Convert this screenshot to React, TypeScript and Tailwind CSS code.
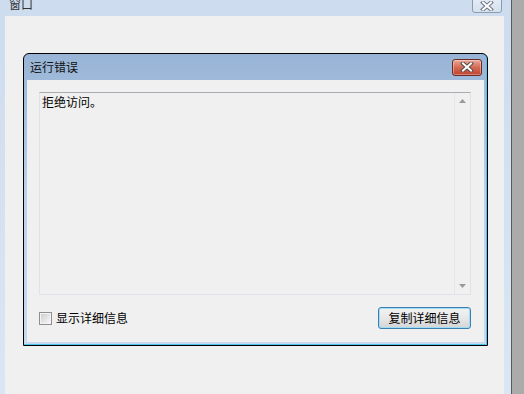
import React from "react";

const font = { fontFamily: '"Noto Sans CJK SC", "Noto Sans", sans-serif' };

function XIcon({ w, h, outline, fill }: { w: number; h: number; outline: string; fill: string }) {
  return (
    <svg width={w} height={h} viewBox="0 0 12 10">
      <path d="M2 1.5 L10 8.5 M10 1.5 L2 8.5" stroke={outline} strokeWidth="4" strokeLinecap="square" />
      <path d="M2 1.5 L10 8.5 M10 1.5 L2 8.5" stroke={fill} strokeWidth="2" strokeLinecap="square" />
    </svg>
  );
}

export default function App() {
  return (
    <div className="flex h-[394px] w-[524px] overflow-hidden text-[12px] leading-none text-black" style={font}>
      {/* outer window frame */}
      <div className="flex w-[511px] flex-col bg-gradient-to-b from-[#cddcee] to-[#dae6f3]">
        {/* title bar */}
        <div className="flex h-[16px] items-start justify-between pl-[9px] pr-[9px]">
          <span className="-mt-[2px] text-[12px] leading-[12px] text-[#333]">窗口</span>
          <div className="-mt-[2px] flex h-[15px] w-[30px] items-center justify-center rounded-b-[3px] border border-[#8d9bb0] bg-gradient-to-b from-[#e4ecf6] to-[#d5e1ef]">
            <XIcon w={14} h={10} outline="#6f7784" fill="#ffffff" />
          </div>
        </div>
        {/* client area */}
        <div className="ml-[5px] mr-[7px] flex-1 bg-[#f0f0f0] pl-[18px] pt-[37px]">
          {/* dialog */}
          <div className="flex h-[293px] w-[465px] flex-col rounded-t-[6px] border border-black bg-gradient-to-b from-[#98b4d6] via-[#bcd3ec] to-[#c6daef] px-[3px] pb-[3px] shadow-[inset_-1px_0_0_#4fc3e8,inset_0_-1px_0_#4fc3e8]">
            <div className="flex h-[26px] shrink-0 items-center justify-between pl-[3px] pr-[2px]">
              <span className="text-[12px] text-[#111]">运行错误</span>
              <div className="flex h-[17px] w-[30px] items-center justify-center rounded-[3px] border border-[#6b2b22] bg-gradient-to-b from-[#e9a899] via-[#d46a55] to-[#c0412b] shadow-[inset_0_0_0_1px_rgba(255,255,255,0.35)]">
                <XIcon w={14} h={10} outline="#5a4a48" fill="#ffffff" />
              </div>
            </div>
            <div className="flex flex-1 flex-col bg-[#f0f0f0] pl-[12px] pr-[13px] pt-[12px]">
              {/* text box */}
              <div className="flex h-[203px] w-[432px] border border-[#dfe3e8] border-t-[#abadb3] bg-[#f0f0f0]">
                <div className="flex-1 pl-[2px] pt-[3px] text-[12px] leading-[12px]">拒绝访问。</div>
                <div className="flex w-[16px] flex-col items-center justify-between border-l border-[#e6e6e6] py-[6px]">
                  <svg width="7" height="4" viewBox="0 0 7 4"><path d="M3.5 0 L7 4 L0 4 Z" fill="#9a9a9a" /></svg>
                  <svg width="7" height="4" viewBox="0 0 7 4"><path d="M0 0 L7 0 L3.5 4 Z" fill="#9a9a9a" /></svg>
                </div>
              </div>
              {/* bottom row */}
              <div className="mt-[12px] flex items-center justify-between">
                <div className="flex items-center gap-[4px]">
                  <div className="h-[13px] w-[13px] border border-[#8f8f8f] bg-[#f4f4f4] p-[1px]">
                    <div className="h-full w-full bg-gradient-to-br from-[#cfcfcf] to-[#f6f6f6]" />
                  </div>
                  <span className="text-[12px]">显示详细信息</span>
                </div>
                <button className="flex h-[22px] w-[93px] items-center justify-center rounded-[3px] border border-[#3c7fb1] bg-gradient-to-b from-[#f3f3f3] via-[#e8e8e8] to-[#d4d4d4] text-[12px] shadow-[inset_0_0_0_1px_#9fdcf6]">
                  复制详细信息
                </button>
              </div>
            </div>
          </div>
        </div>
      </div>
      <div className="w-[1px] bg-[#5a5a5a]" />
      <div className="flex-1 bg-[#ababab]" />
    </div>
  );
}
